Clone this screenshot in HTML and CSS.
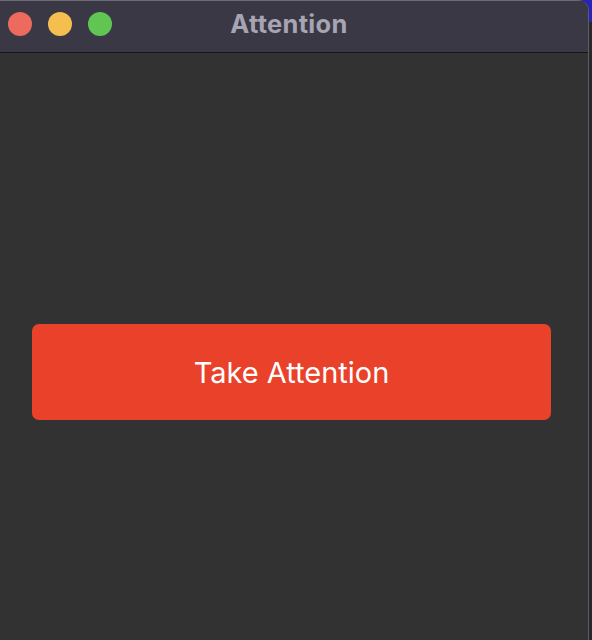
FILE: index.html
```html
<!DOCTYPE html>
<html>
<head>
<meta charset="utf-8">
<link rel="stylesheet" href="styles.css">
</head>
<body>
<div class="window">
  <div class="titlebar">
    <div class="lights">
      <span class="light red"></span>
      <span class="light yellow"></span>
      <span class="light green"></span>
    </div>
    <div class="title">Attention</div>
  </div>
  <div class="content">
    <button class="attn">Take Attention</button>
  </div>
</div>
</body>
</html>
```
FILE: styles.css
```css
html, body {
  margin: 0;
  padding: 0;
  width: 592px;
  height: 640px;
  overflow: hidden;
}
body {
  background: linear-gradient(#2a23b8 0, #2a23b8 22px, #29282e 22px);
}
.window {
  width: 588px;
  height: 640px;
  background: #323232;
  border-right: 1px solid #5e5e62;
  border-radius: 0 11px 0 0;
  overflow: hidden;
  display: flex;
  flex-direction: column;
  font-family: Inter, "Liberation Sans", sans-serif;
}
.titlebar {
  position: relative;
  background: #3a3844;
  border-top: 1px solid #6b6a72;
  border-bottom: 1px solid #161616;
  box-sizing: border-box;
  height: 53px;
  display: flex;
  align-items: center;
  justify-content: center;
}
.lights {
  position: absolute;
  left: 8px;
  top: 11px;
  display: flex;
  gap: 16px;
}
.light {
  width: 24px;
  height: 24px;
  border-radius: 50%;
  display: block;
}
.red { background: #ec6a5e; }
.yellow { background: #f4bf4f; }
.green { background: #61c554; }
.title {
  color: #a7a4b3;
  font-weight: 700;
  font-size: 25.5px;
  margin-top: -7px;
  margin-left: -10px;
  letter-spacing: 0.3px;
}
.content {
  flex: 1;
  padding: 271px 0 0 32px;
}
.attn {
  display: block;
  width: 519px;
  height: 96px;
  background: #e9412a;
  border: none;
  border-radius: 7px;
  color: #ffffff;
  font-family: Inter, "Liberation Sans", sans-serif;
  font-size: 29px;
  font-weight: 400;
  padding: 0;
  margin: 0;
}
```
